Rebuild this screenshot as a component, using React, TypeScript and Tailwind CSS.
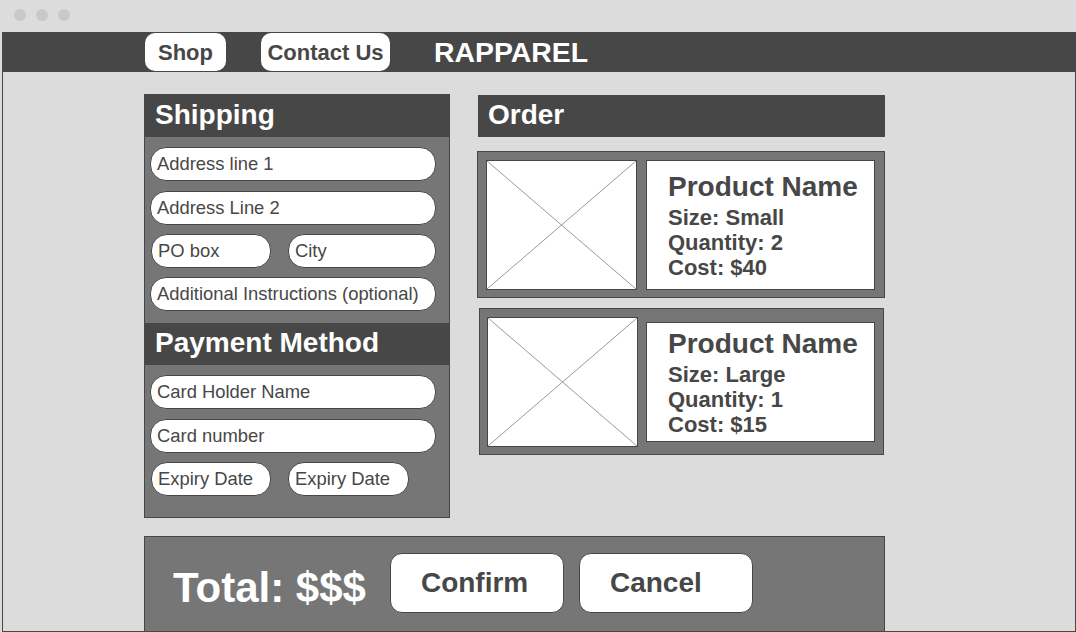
import React from 'react';

const Field = ({ label, className = '' }: { label: string; className?: string }) => (
  <div className={`h-[34px] flex items-center rounded-[16px] border border-[#474747] bg-white pl-[6px] text-[18.4px] text-[#474747] ${className}`}>
    {label}
  </div>
);

const PanelHeader = ({ title }: { title: string }) => (
  <div className="h-[42px] flex items-center bg-[#474747] pl-[10px] pb-[2px] text-[28px] font-bold text-white">
    {title}
  </div>
);

const Placeholder = () => (
  <div className="relative w-[151px] h-[130px] shrink-0 border border-[#474747] bg-white">
    <svg className="absolute inset-0 w-full h-full" viewBox="0 0 100 100" preserveAspectRatio="none">
      <line x1="0" y1="0" x2="100" y2="100" stroke="#9a9a9a" strokeWidth="1" vectorEffect="non-scaling-stroke" />
      <line x1="100" y1="0" x2="0" y2="100" stroke="#9a9a9a" strokeWidth="1" vectorEffect="non-scaling-stroke" />
    </svg>
  </div>
);

interface ProductProps {
  size: string;
  qty: number;
  cost: string;
  className: string;
  infoHeight: string;
}

const ProductCard = ({ size, qty, cost, className, infoHeight }: ProductProps) => (
  <div className={`flex items-center h-[147px] border border-[#474747] bg-[#767676] ${className}`}>
    <Placeholder />
    <div className={`w-[229px] ${infoHeight} flex flex-col justify-center border border-[#474747] bg-white pl-[21px] text-[#474747] font-bold`}>
      <div className="text-[28px] leading-[36px]">Product Name</div>
      <div className="text-[22px] leading-[25px]">Size: {size}</div>
      <div className="text-[22px] leading-[25px]">Quantity: {qty}</div>
      <div className="text-[22px] leading-[25px]">Cost: {cost}</div>
    </div>
  </div>
);

export default function App() {
  return (
    <div className="w-[1076px] h-[632px] overflow-hidden bg-[#dcdcdc] font-['Liberation_Sans',Arial,sans-serif]">
      {/* window chrome */}
      <div className="h-8 flex items-center gap-[10px] pl-[14px] pb-[2px]">
        <span className="w-3 h-3 rounded-full bg-[#c9c9c9]" />
        <span className="w-3 h-3 rounded-full bg-[#c9c9c9]" />
        <span className="w-3 h-3 rounded-full bg-[#c9c9c9]" />
      </div>

      <div className="ml-[2px] w-[1074px] h-[600px] flex flex-col border-x border-b border-[#474747]">
        {/* nav */}
        <div className="h-10 shrink-0 flex items-center bg-[#474747] pl-[142px]">
          <button className="w-[81px] h-[38px] rounded-[10px] bg-white text-[22px] font-bold text-[#474747]">Shop</button>
          <button className="ml-[35px] w-[129px] h-[38px] rounded-[10px] bg-white text-[22px] font-bold text-[#474747]">Contact Us</button>
          <span className="ml-[44px] text-[28.4px] font-bold text-white">RAPPAREL</span>
        </div>

        <div className="flex pl-[141px] pt-[22px]">
          {/* shipping + payment */}
          <div className="w-[306px] h-[424px] flex flex-col border border-[#474747] bg-[#767676]">
            <PanelHeader title="Shipping" />
            <div className="flex flex-col gap-[9px] pl-[5px] pt-[10px]">
              <Field label="Address line 1" className="w-[286px] mb-px" />
              <Field label="Address Line 2" className="w-[286px]" />
              <div className="flex gap-[17px] pl-[1px]">
                <Field label="PO box" className="w-[120px]" />
                <Field label="City" className="w-[148px]" />
              </div>
              <Field label="Additional Instructions (optional)" className="w-[286px]" />
            </div>
            <div className="mt-[12px]">
              <PanelHeader title="Payment Method" />
            </div>
            <div className="flex flex-col gap-[9px] pl-[5px] pt-[10px]">
              <Field label="Card Holder Name" className="w-[286px] mb-px" />
              <Field label="Card number" className="w-[286px]" />
              <div className="flex gap-[17px] pl-[1px]">
                <Field label="Expiry Date" className="w-[120px]" />
                <Field label="Expiry Date" className="w-[121px]" />
              </div>
            </div>
          </div>

          {/* order */}
          <div className="ml-[28px] pt-[1px] w-[407px] flex flex-col">
            <div className="h-[42px] flex items-center bg-[#474747] pl-[10px] pb-[2px] text-[28px] font-bold text-white">Order</div>
            <ProductCard
              size="Small"
              qty={2}
              cost="$40"
              className="mt-[14px] -ml-px w-[408px] pl-[8px] gap-[9px]"
              infoHeight="h-[130px]"
            />
            <ProductCard
              size="Large"
              qty={1}
              cost="$15"
              className="mt-[10px] ml-[1px] w-[405px] pl-[7px] gap-[8px]"
              infoHeight="h-[120px]"
            />
          </div>
        </div>

        {/* total bar */}
        <div className="ml-[141px] mt-[18px] w-[741px] flex-1 flex items-start border-x border-t border-[#474747] bg-[#767676] pl-[28px] pt-[16px]">
          <div className="mt-[11px] text-[42px] leading-[48px] font-bold text-white">Total: $$$</div>
          <button className="ml-[24px] w-[174px] h-[60px] rounded-[12px] border border-[#474747] bg-white pl-[30px] text-left text-[28px] font-bold text-[#474747]">Confirm</button>
          <button className="ml-[15px] w-[174px] h-[60px] rounded-[12px] border border-[#474747] bg-white pl-[30px] text-left text-[28px] font-bold text-[#474747]">Cancel</button>
        </div>
      </div>
    </div>
  );
}
